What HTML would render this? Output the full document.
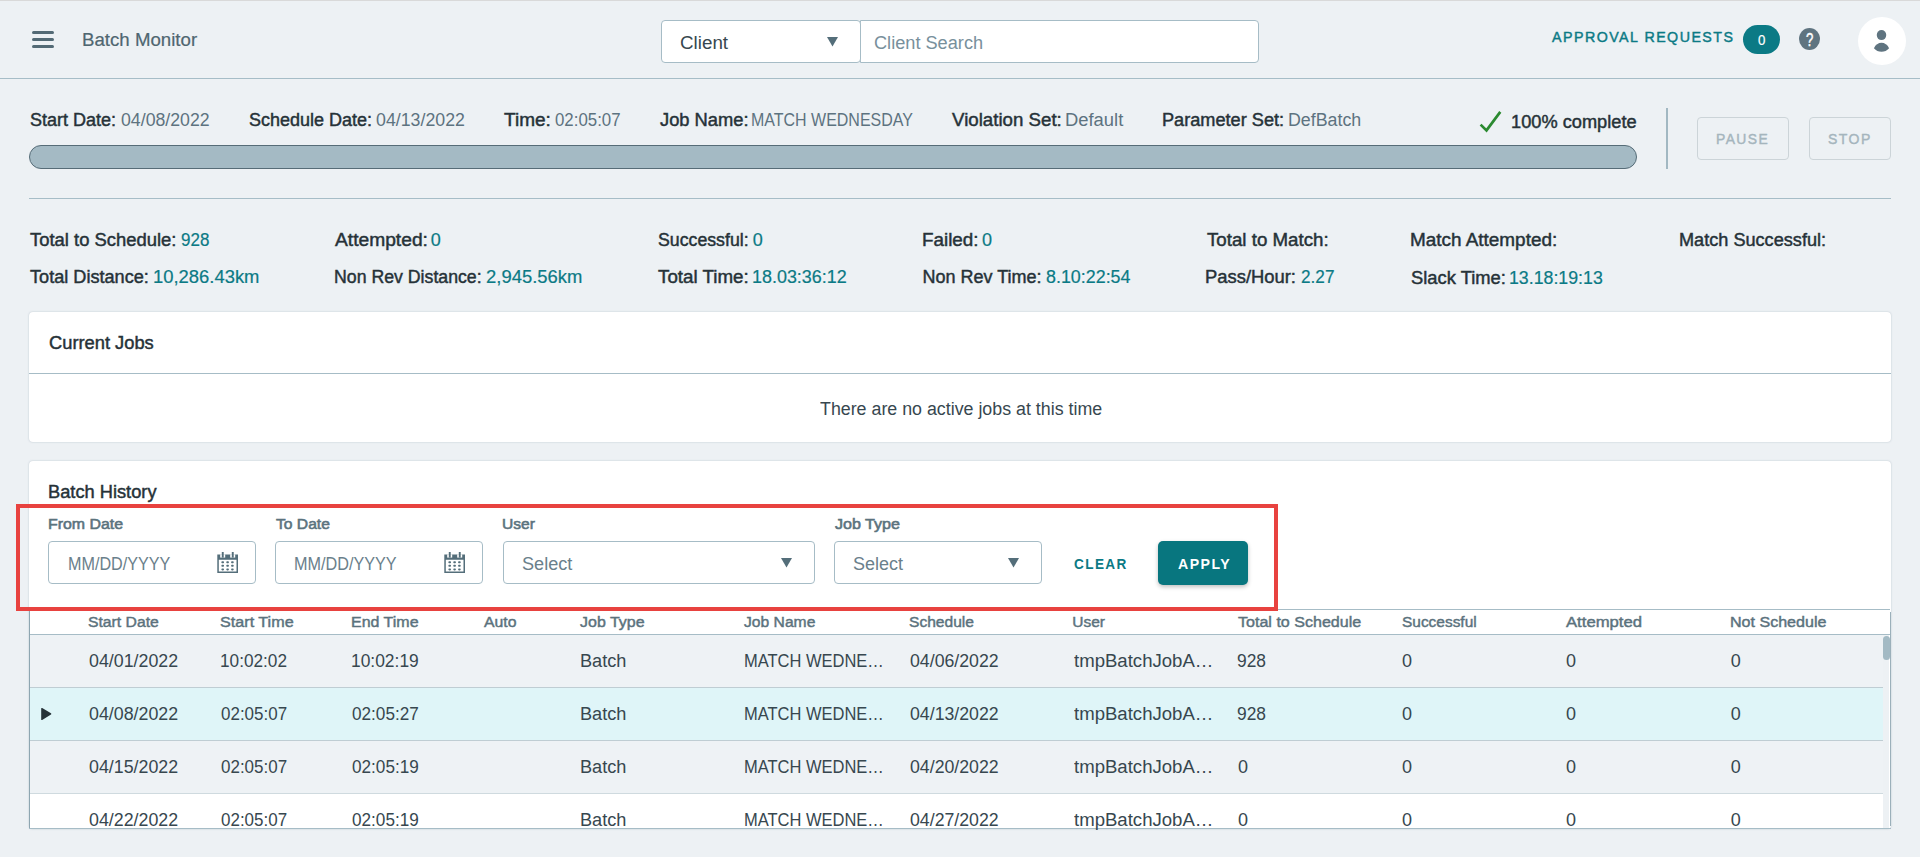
<!DOCTYPE html>
<html><head><meta charset="utf-8"><title>Batch Monitor</title>
<style>
html,body{margin:0;padding:0;}
body{width:1920px;height:857px;overflow:hidden;position:relative;background:#edf1f4;font-family:"Liberation Sans",sans-serif;}
.a{position:absolute;box-sizing:border-box;}
.t{position:absolute;line-height:0;white-space:nowrap;transform-origin:0 0;font-family:"Liberation Sans",sans-serif;}
.bar{position:absolute;left:32px;width:22px;height:3px;border-radius:1.5px;background:#536a75;}
</style></head><body>
<div class="a" style="left:0;top:0;width:1920px;height:1px;background:#d9d9d9"></div>
<!-- header -->
<div class="a" style="left:0;top:78px;width:1920px;height:1px;background:#a6bdc7"></div>
<div class="bar" style="top:31px"></div>
<div class="bar" style="top:38px"></div>
<div class="bar" style="top:45px"></div>
<div class="a" style="left:860px;top:20px;width:399px;height:43px;background:#fff;border:1px solid #a6bcc6;border-radius:0 4px 4px 0"></div>
<div class="a" style="left:661px;top:20px;width:200px;height:43px;background:#fff;border:1px solid #a6bcc6;border-radius:4px"></div>
<svg class="a" style="left:826px;top:36px" width="13" height="11" viewBox="0 0 13 11"><path d="M1 1 L12 1 L6.5 10.5 Z" fill="#546e7a"/></svg>
<div class="a" style="left:1743px;top:25px;width:37px;height:29px;border-radius:14.5px;background:#0b7a85"></div>
<div class="a" style="left:1799px;top:28px;width:21px;height:22px;border-radius:50%;background:#5f7480"></div>
<div class="a" style="left:1858px;top:17px;width:48px;height:48px;border-radius:50%;background:#fff"></div>
<svg class="a" style="left:1872px;top:29px" width="20" height="24" viewBox="0 0 20 24">
 <ellipse cx="9.5" cy="6.1" rx="4.75" ry="5" fill="#5f7480"/>
 <path d="M1.9 19.3 C3.5 15.5 6.5 13.7 9.5 13.7 C12.5 13.7 15.5 15.5 17.1 19.3 C15 21.8 12.5 22.8 9.5 22.8 C6.5 22.8 4 21.8 1.9 19.3 Z" fill="#5f7480"/>
</svg>
<!-- info bar -->
<div class="a" style="left:29px;top:145px;width:1608px;height:24px;border-radius:12px;background:#a4bac4;border:1px solid #566c77"></div>
<svg class="a" style="left:1476px;top:108px" width="30" height="28" viewBox="0 0 30 28"><path d="M4.6 16.6 L10.5 22.4 L24.3 3.9" fill="none" stroke="#2b8a30" stroke-width="2.7"/></svg>
<div class="a" style="left:1666px;top:108px;width:2px;height:61px;background:#a2b8c2"></div>
<div class="a" style="left:1697px;top:117px;width:92px;height:43px;border:1px solid #ccd4d8;border-radius:4px"></div>
<div class="a" style="left:1809px;top:117px;width:82px;height:43px;border:1px solid #ccd4d8;border-radius:4px"></div>
<div class="a" style="left:29px;top:198px;width:1862px;height:1px;background:#a6bdc7"></div>
<!-- current jobs card -->
<div class="a" style="left:29px;top:312px;width:1862px;height:130px;background:#fff;border-radius:4px;box-shadow:0 0 2px rgba(80,110,125,.35)"></div>
<div class="a" style="left:29px;top:373px;width:1862px;height:1px;background:#a6bcc6"></div>
<!-- batch history card -->
<div class="a" style="left:29px;top:461px;width:1862px;height:368px;background:#fff;border-radius:4px;box-shadow:0 0 2px rgba(80,110,125,.35)"></div>
<!-- filters -->
<div class="a" style="left:48px;top:541px;width:208px;height:43px;border:1px solid #a6bcc6;border-radius:4px;background:#fff"></div>
<div class="a" style="left:275px;top:541px;width:208px;height:43px;border:1px solid #a6bcc6;border-radius:4px;background:#fff"></div>
<div class="a" style="left:503px;top:541px;width:312px;height:43px;border:1px solid #a6bcc6;border-radius:4px;background:#fff"></div>
<div class="a" style="left:834px;top:541px;width:208px;height:43px;border:1px solid #a6bcc6;border-radius:4px;background:#fff"></div>
<svg class="a" style="left:780px;top:557px" width="13" height="11" viewBox="0 0 13 11"><path d="M1 1 L12 1 L6.5 10.5 Z" fill="#546e7a"/></svg>
<svg class="a" style="left:1007px;top:557px" width="13" height="11" viewBox="0 0 13 11"><path d="M1 1 L12 1 L6.5 10.5 Z" fill="#546e7a"/></svg>
<div class="a" style="left:1158px;top:541px;width:90px;height:44px;border-radius:5px;background:#08767f;box-shadow:0 2px 4px rgba(0,0,0,.25)"></div>
<svg class="a" style="left:217px;top:552px" width="22" height="22" viewBox="0 0 22 22">
<path fill="#546e7a" fill-rule="evenodd" d="M0.3 2.4 H21 V21 H0.3 Z M1.8 7.8 V19.6 H19.5 V7.8 Z"/>
<rect x="3.2" y="2.3" width="5" height="3.3" fill="#fff"/><rect x="13.2" y="2.3" width="5" height="3.3" fill="#fff"/>
<rect x="4.8" y="0" width="1.9" height="5.6" fill="#546e7a"/><rect x="14.8" y="0" width="1.9" height="5.6" fill="#546e7a"/>
<g fill="#546e7a"><rect x="4.4" y="9.2" width="2.6" height="2" rx=".8"/><rect x="9.3" y="9.2" width="2.6" height="2" rx=".8"/><rect x="14.1" y="9.2" width="2.6" height="2" rx=".8"/>
<rect x="4.4" y="12.8" width="2.6" height="2" rx=".8"/><rect x="9.3" y="12.8" width="2.6" height="2" rx=".8"/><rect x="14.1" y="12.8" width="2.6" height="2" rx=".8"/>
<rect x="4.4" y="16.4" width="2.6" height="2" rx=".8"/><rect x="9.3" y="16.4" width="2.6" height="2" rx=".8"/><rect x="14.1" y="16.4" width="2.6" height="2" rx=".8"/></g>
</svg>
<svg class="a" style="left:444px;top:552px" width="22" height="22" viewBox="0 0 22 22">
<path fill="#546e7a" fill-rule="evenodd" d="M0.3 2.4 H21 V21 H0.3 Z M1.8 7.8 V19.6 H19.5 V7.8 Z"/>
<rect x="3.2" y="2.3" width="5" height="3.3" fill="#fff"/><rect x="13.2" y="2.3" width="5" height="3.3" fill="#fff"/>
<rect x="4.8" y="0" width="1.9" height="5.6" fill="#546e7a"/><rect x="14.8" y="0" width="1.9" height="5.6" fill="#546e7a"/>
<g fill="#546e7a"><rect x="4.4" y="9.2" width="2.6" height="2" rx=".8"/><rect x="9.3" y="9.2" width="2.6" height="2" rx=".8"/><rect x="14.1" y="9.2" width="2.6" height="2" rx=".8"/>
<rect x="4.4" y="12.8" width="2.6" height="2" rx=".8"/><rect x="9.3" y="12.8" width="2.6" height="2" rx=".8"/><rect x="14.1" y="12.8" width="2.6" height="2" rx=".8"/>
<rect x="4.4" y="16.4" width="2.6" height="2" rx=".8"/><rect x="9.3" y="16.4" width="2.6" height="2" rx=".8"/><rect x="14.1" y="16.4" width="2.6" height="2" rx=".8"/></g>
</svg>
<!-- table -->
<div class="a" style="left:29px;top:609px;width:1861px;height:1px;background:#a6bcc6"></div>
<div class="a" style="left:29px;top:610px;width:1px;height:218px;background:#8ea6b1"></div>
<div class="a" style="left:1890px;top:612px;width:1px;height:214px;background:#9bb0ba"></div>
<div class="a" style="left:30px;top:634px;width:1860px;height:1px;background:#a6bcc6"></div>
<div class="a" style="left:30px;top:635px;width:1853px;height:52px;background:#eef2f5"></div>
<div class="a" style="left:30px;top:687px;width:1853px;height:1px;background:#bfcdd3"></div>
<div class="a" style="left:30px;top:688px;width:1853px;height:52px;background:#dff5f8"></div>
<div class="a" style="left:30px;top:740px;width:1853px;height:1px;background:#bfcdd3"></div>
<div class="a" style="left:30px;top:741px;width:1853px;height:52px;background:#eef2f5"></div>
<div class="a" style="left:30px;top:793px;width:1853px;height:1px;background:#cfdadf"></div>
<div class="a" style="left:1883px;top:635px;width:6px;height:193px;background:#edf1f4"></div>
<div class="a" style="left:1883px;top:636px;width:7px;height:24px;border-radius:3.5px;background:#a3bac4"></div>
<div class="a" style="left:29px;top:828px;width:1862px;height:1px;background:#a6bcc6"></div>
<svg class="a" style="left:40px;top:707px" width="12" height="14" viewBox="0 0 12 14"><path d="M1.2 1.5 Q1.2 0.5 2.2 1.1 L11 6.3 Q11.8 7 11 7.6 L2.2 12.9 Q1.2 13.5 1.2 12.4 Z" fill="#263238"/></svg>
<!-- red rect -->
<div class="a" style="left:16px;top:504px;width:1262px;height:107px;border:4px solid #e8423f"></div>
<div class="t" style="left:81.96px;top:40.00px;font-size:18px;font-weight:400;color:#4f6670;letter-spacing:0.000px;transform:scaleX(1.0364);-webkit-text-stroke-width:.2px;">Batch Monitor</div>
<div class="t" style="left:679.96px;top:43.00px;font-size:18px;font-weight:400;color:#37474f;letter-spacing:0.000px;transform:scaleX(1.0444);">Client</div>
<div class="t" style="left:873.99px;top:43.00px;font-size:18px;font-weight:400;color:#78909c;letter-spacing:0.000px;transform:scaleX(1.0094);">Client Search</div>
<div class="t" style="left:1552.00px;top:37.00px;font-size:15.5px;font-weight:400;color:#0b7a85;letter-spacing:1.600px;transform:scaleX(0.9188);-webkit-text-stroke-width:.45px;">APPROVAL REQUESTS</div>
<div class="t" style="left:30.00px;top:120.00px;font-size:18px;font-weight:400;color:#263238;letter-spacing:0.000px;-webkit-text-stroke-width:.45px;">Start Date:</div>
<div class="t" style="left:121.00px;top:120.00px;font-size:18px;font-weight:400;color:#5d7380;letter-spacing:0.000px;transform:scaleX(0.9844);">04/08/2022</div>
<div class="t" style="left:249.00px;top:120.00px;font-size:18px;font-weight:400;color:#263238;letter-spacing:0.000px;-webkit-text-stroke-width:.45px;">Schedule Date:</div>
<div class="t" style="left:376.00px;top:120.00px;font-size:18px;font-weight:400;color:#5d7380;letter-spacing:0.000px;transform:scaleX(0.9867);">04/13/2022</div>
<div class="t" style="left:504.00px;top:120.00px;font-size:18px;font-weight:400;color:#263238;letter-spacing:0.000px;transform:scaleX(1.0558);-webkit-text-stroke-width:.45px;">Time:</div>
<div class="t" style="left:555.00px;top:120.00px;font-size:18px;font-weight:400;color:#5d7380;letter-spacing:0.000px;transform:scaleX(0.9357);">02:05:07</div>
<div class="t" style="left:660.00px;top:120.00px;font-size:18px;font-weight:400;color:#263238;letter-spacing:0.000px;transform:scaleX(1.0174);-webkit-text-stroke-width:.45px;">Job Name:</div>
<div class="t" style="left:751.11px;top:120.00px;font-size:18px;font-weight:400;color:#5d7380;letter-spacing:0.000px;transform:scaleX(0.8878);">MATCH WEDNESDAY</div>
<div class="t" style="left:952.00px;top:120.00px;font-size:18px;font-weight:400;color:#263238;letter-spacing:0.000px;transform:scaleX(1.0381);-webkit-text-stroke-width:.45px;">Violation Set:</div>
<div class="t" style="left:1064.78px;top:120.00px;font-size:18px;font-weight:400;color:#5d7380;letter-spacing:0.000px;transform:scaleX(1.0214);">Default</div>
<div class="t" style="left:1162.19px;top:120.00px;font-size:18px;font-weight:400;color:#263238;letter-spacing:0.000px;transform:scaleX(1.0084);-webkit-text-stroke-width:.45px;">Parameter Set:</div>
<div class="t" style="left:1288.01px;top:120.00px;font-size:18px;font-weight:400;color:#5d7380;letter-spacing:0.000px;transform:scaleX(0.9889);">DefBatch</div>
<div class="t" style="left:1510.99px;top:122.00px;font-size:18px;font-weight:400;color:#263238;letter-spacing:0.000px;transform:scaleX(1.0122);-webkit-text-stroke-width:.45px;">100% complete</div>
<div class="t" style="left:1716.11px;top:139.00px;font-size:15.5px;font-weight:400;color:#a5b5bd;letter-spacing:1.600px;transform:scaleX(0.8947);-webkit-text-stroke-width:.45px;">PAUSE</div>
<div class="t" style="left:1828.00px;top:139.00px;font-size:15.5px;font-weight:400;color:#a5b5bd;letter-spacing:1.600px;transform:scaleX(0.9043);-webkit-text-stroke-width:.45px;">STOP</div>
<div class="t" style="left:30.00px;top:240.00px;font-size:18px;font-weight:400;color:#263238;letter-spacing:0.000px;transform:scaleX(1.0232);-webkit-text-stroke-width:.45px;">Total to Schedule:</div>
<div class="t" style="left:180.70px;top:240.00px;font-size:18px;font-weight:400;color:#0b7a85;letter-spacing:0.000px;transform:scaleX(0.9433);-webkit-text-stroke-width:.2px;">928</div>
<div class="t" style="left:334.50px;top:240.00px;font-size:18px;font-weight:400;color:#263238;letter-spacing:0.000px;transform:scaleX(1.0674);-webkit-text-stroke-width:.45px;">Attempted:</div>
<div class="t" style="left:430.70px;top:240.00px;font-size:18px;font-weight:400;color:#0b7a85;letter-spacing:0.000px;-webkit-text-stroke-width:.2px;">0</div>
<div class="t" style="left:658.00px;top:240.00px;font-size:18px;font-weight:400;color:#263238;letter-spacing:0.000px;transform:scaleX(0.9846);-webkit-text-stroke-width:.45px;">Successful:</div>
<div class="t" style="left:752.80px;top:240.00px;font-size:18px;font-weight:400;color:#0b7a85;letter-spacing:0.000px;-webkit-text-stroke-width:.2px;">0</div>
<div class="t" style="left:922.45px;top:240.00px;font-size:18px;font-weight:400;color:#263238;letter-spacing:0.000px;transform:scaleX(1.0462);-webkit-text-stroke-width:.45px;">Failed:</div>
<div class="t" style="left:982.00px;top:240.00px;font-size:18px;font-weight:400;color:#0b7a85;letter-spacing:0.000px;-webkit-text-stroke-width:.2px;">0</div>
<div class="t" style="left:1206.50px;top:240.00px;font-size:18px;font-weight:400;color:#263238;letter-spacing:0.000px;transform:scaleX(1.0388);-webkit-text-stroke-width:.45px;">Total to Match:</div>
<div class="t" style="left:1409.95px;top:240.00px;font-size:18px;font-weight:400;color:#263238;letter-spacing:0.000px;transform:scaleX(1.0507);-webkit-text-stroke-width:.45px;">Match Attempted:</div>
<div class="t" style="left:1678.99px;top:240.00px;font-size:18px;font-weight:400;color:#263238;letter-spacing:0.000px;transform:scaleX(1.0069);-webkit-text-stroke-width:.45px;">Match Successful:</div>
<div class="t" style="left:30.00px;top:277.00px;font-size:18px;font-weight:400;color:#263238;letter-spacing:0.000px;transform:scaleX(1.0068);-webkit-text-stroke-width:.45px;">Total Distance:</div>
<div class="t" style="left:152.68px;top:277.00px;font-size:18px;font-weight:400;color:#0b7a85;letter-spacing:0.000px;transform:scaleX(1.0225);-webkit-text-stroke-width:.2px;">10,286.43km</div>
<div class="t" style="left:334.02px;top:277.00px;font-size:18px;font-weight:400;color:#263238;letter-spacing:0.000px;transform:scaleX(0.9838);-webkit-text-stroke-width:.45px;">Non Rev Distance:</div>
<div class="t" style="left:485.70px;top:277.00px;font-size:18px;font-weight:400;color:#0b7a85;letter-spacing:0.000px;transform:scaleX(1.0247);-webkit-text-stroke-width:.2px;">2,945.56km</div>
<div class="t" style="left:658.00px;top:277.00px;font-size:18px;font-weight:400;color:#263238;letter-spacing:0.000px;transform:scaleX(1.0419);-webkit-text-stroke-width:.45px;">Total Time:</div>
<div class="t" style="left:752.40px;top:277.00px;font-size:18px;font-weight:400;color:#0b7a85;letter-spacing:0.000px;transform:scaleX(0.9957);-webkit-text-stroke-width:.2px;">18.03:36:12</div>
<div class="t" style="left:922.50px;top:277.00px;font-size:18px;font-weight:400;color:#263238;letter-spacing:0.000px;-webkit-text-stroke-width:.45px;">Non Rev Time:</div>
<div class="t" style="left:1045.60px;top:277.00px;font-size:18px;font-weight:400;color:#0b7a85;letter-spacing:0.000px;transform:scaleX(0.9929);-webkit-text-stroke-width:.2px;">8.10:22:54</div>
<div class="t" style="left:1205.48px;top:277.00px;font-size:18px;font-weight:400;color:#263238;letter-spacing:0.000px;transform:scaleX(1.0218);-webkit-text-stroke-width:.45px;">Pass/Hour:</div>
<div class="t" style="left:1300.60px;top:277.00px;font-size:18px;font-weight:400;color:#0b7a85;letter-spacing:0.000px;transform:scaleX(0.9543);-webkit-text-stroke-width:.2px;">2.27</div>
<div class="t" style="left:1411.00px;top:278.00px;font-size:18px;font-weight:400;color:#263238;letter-spacing:0.000px;transform:scaleX(1.0196);-webkit-text-stroke-width:.45px;">Slack Time:</div>
<div class="t" style="left:1509.31px;top:278.00px;font-size:18px;font-weight:400;color:#0b7a85;letter-spacing:0.000px;transform:scaleX(0.9862);-webkit-text-stroke-width:.2px;">13.18:19:13</div>
<div class="t" style="left:49.00px;top:343.00px;font-size:18px;font-weight:400;color:#263238;letter-spacing:0.000px;transform:scaleX(1.0165);-webkit-text-stroke-width:.45px;">Current Jobs</div>
<div class="t" style="left:819.50px;top:409.00px;font-size:18px;font-weight:400;color:#37474f;letter-spacing:0.000px;transform:scaleX(0.9895);">There are no active jobs at this time</div>
<div class="t" style="left:48.49px;top:492.00px;font-size:18px;font-weight:400;color:#263238;letter-spacing:0.000px;transform:scaleX(1.0140);-webkit-text-stroke-width:.45px;">Batch History</div>
<div class="t" style="left:47.77px;top:524.00px;font-size:15.5px;font-weight:400;color:#5b737e;letter-spacing:0.000px;transform:scaleX(1.0264);-webkit-text-stroke-width:.6px;">From Date</div>
<div class="t" style="left:275.50px;top:524.00px;font-size:15.5px;font-weight:400;color:#5b737e;letter-spacing:0.000px;transform:scaleX(1.0094);-webkit-text-stroke-width:.6px;">To Date</div>
<div class="t" style="left:502.49px;top:524.00px;font-size:15.5px;font-weight:400;color:#5b737e;letter-spacing:0.000px;transform:scaleX(1.0063);-webkit-text-stroke-width:.6px;">User</div>
<div class="t" style="left:834.60px;top:524.00px;font-size:15.5px;font-weight:400;color:#5b737e;letter-spacing:0.000px;transform:scaleX(1.0381);-webkit-text-stroke-width:.6px;">Job Type</div>
<div class="t" style="left:67.60px;top:564.00px;font-size:18px;font-weight:400;color:#6a808b;letter-spacing:0.000px;transform:scaleX(0.8982);">MM/DD/YYYY</div>
<div class="t" style="left:294.10px;top:564.00px;font-size:18px;font-weight:400;color:#6a808b;letter-spacing:0.000px;transform:scaleX(0.9000);">MM/DD/YYYY</div>
<div class="t" style="left:521.69px;top:564.00px;font-size:18px;font-weight:400;color:#6a808b;letter-spacing:0.000px;transform:scaleX(1.0061);">Select</div>
<div class="t" style="left:853.00px;top:564.00px;font-size:18px;font-weight:400;color:#6a808b;letter-spacing:0.000px;">Select</div>
<div class="t" style="left:1074.00px;top:564.00px;font-size:15.5px;font-weight:700;color:#0b7a85;letter-spacing:1.600px;transform:scaleX(0.8763);">CLEAR</div>
<div class="t" style="left:1177.50px;top:564.00px;font-size:15.5px;font-weight:700;color:#ffffff;letter-spacing:1.600px;transform:scaleX(0.9107);">APPLY</div>
<div class="t" style="left:88.00px;top:622.00px;font-size:15.5px;font-weight:400;color:#5b727d;letter-spacing:0.000px;transform:scaleX(1.0143);-webkit-text-stroke-width:.45px;">Start Date</div>
<div class="t" style="left:220.00px;top:622.00px;font-size:15.5px;font-weight:400;color:#5b727d;letter-spacing:0.000px;transform:scaleX(1.0423);-webkit-text-stroke-width:.45px;">Start Time</div>
<div class="t" style="left:351.27px;top:622.00px;font-size:15.5px;font-weight:400;color:#5b727d;letter-spacing:0.000px;transform:scaleX(1.0312);-webkit-text-stroke-width:.45px;">End Time</div>
<div class="t" style="left:483.70px;top:622.00px;font-size:15.5px;font-weight:400;color:#5b727d;letter-spacing:0.000px;transform:scaleX(1.0187);-webkit-text-stroke-width:.45px;">Auto</div>
<div class="t" style="left:580.00px;top:622.00px;font-size:15.5px;font-weight:400;color:#5b727d;letter-spacing:0.000px;transform:scaleX(1.0317);-webkit-text-stroke-width:.45px;">Job Type</div>
<div class="t" style="left:744.30px;top:622.00px;font-size:15.5px;font-weight:400;color:#5b727d;letter-spacing:0.000px;transform:scaleX(1.0099);-webkit-text-stroke-width:.45px;">Job Name</div>
<div class="t" style="left:909.00px;top:622.00px;font-size:15.5px;font-weight:400;color:#5b727d;letter-spacing:0.000px;transform:scaleX(1.0046);-webkit-text-stroke-width:.45px;">Schedule</div>
<div class="t" style="left:1072.30px;top:622.00px;font-size:15.5px;font-weight:400;color:#5b727d;letter-spacing:0.000px;-webkit-text-stroke-width:.45px;">User</div>
<div class="t" style="left:1237.70px;top:622.00px;font-size:15.5px;font-weight:400;color:#5b727d;letter-spacing:0.000px;transform:scaleX(1.0361);-webkit-text-stroke-width:.45px;">Total to Schedule</div>
<div class="t" style="left:1402.00px;top:622.00px;font-size:15.5px;font-weight:400;color:#5b727d;letter-spacing:0.000px;transform:scaleX(0.9960);-webkit-text-stroke-width:.45px;">Successful</div>
<div class="t" style="left:1566.00px;top:622.00px;font-size:15.5px;font-weight:400;color:#5b727d;letter-spacing:0.000px;transform:scaleX(1.0757);-webkit-text-stroke-width:.45px;">Attempted</div>
<div class="t" style="left:1729.66px;top:622.00px;font-size:15.5px;font-weight:400;color:#5b727d;letter-spacing:0.000px;transform:scaleX(1.0359);-webkit-text-stroke-width:.45px;">Not Schedule</div>
<div class="t" style="left:88.70px;top:661.00px;font-size:18px;font-weight:400;color:#37474f;letter-spacing:0.000px;transform:scaleX(0.9889);">04/01/2022</div>
<div class="t" style="left:219.74px;top:661.00px;font-size:18px;font-weight:400;color:#37474f;letter-spacing:0.000px;transform:scaleX(0.9565);">10:02:02</div>
<div class="t" style="left:351.33px;top:661.00px;font-size:18px;font-weight:400;color:#37474f;letter-spacing:0.000px;transform:scaleX(0.9667);">10:02:19</div>
<div class="t" style="left:580.29px;top:661.00px;font-size:18px;font-weight:400;color:#37474f;letter-spacing:0.000px;transform:scaleX(1.0091);">Batch</div>
<div class="t" style="left:744.38px;top:661.00px;font-size:18px;font-weight:400;color:#37474f;letter-spacing:0.000px;transform:scaleX(0.9160);">MATCH WEDNE…</div>
<div class="t" style="left:909.70px;top:661.00px;font-size:18px;font-weight:400;color:#37474f;letter-spacing:0.000px;transform:scaleX(0.9844);">04/06/2022</div>
<div class="t" style="left:1074.00px;top:661.00px;font-size:18px;font-weight:400;color:#37474f;letter-spacing:0.000px;transform:scaleX(1.0323);">tmpBatchJobA…</div>
<div class="t" style="left:1237.03px;top:661.00px;font-size:18px;font-weight:400;color:#37474f;letter-spacing:0.000px;transform:scaleX(0.9655);">928</div>
<div class="t" style="left:1402.00px;top:661.00px;font-size:18px;font-weight:400;color:#37474f;letter-spacing:0.000px;">0</div>
<div class="t" style="left:1566.00px;top:661.00px;font-size:18px;font-weight:400;color:#37474f;letter-spacing:0.000px;">0</div>
<div class="t" style="left:1730.70px;top:661.00px;font-size:18px;font-weight:400;color:#37474f;letter-spacing:0.000px;">0</div>
<div class="t" style="left:88.70px;top:714.00px;font-size:18px;font-weight:400;color:#37474f;letter-spacing:0.000px;transform:scaleX(0.9889);">04/08/2022</div>
<div class="t" style="left:220.70px;top:714.00px;font-size:18px;font-weight:400;color:#37474f;letter-spacing:0.000px;transform:scaleX(0.9429);">02:05:07</div>
<div class="t" style="left:352.30px;top:714.00px;font-size:18px;font-weight:400;color:#37474f;letter-spacing:0.000px;transform:scaleX(0.9529);">02:05:27</div>
<div class="t" style="left:580.29px;top:714.00px;font-size:18px;font-weight:400;color:#37474f;letter-spacing:0.000px;transform:scaleX(1.0091);">Batch</div>
<div class="t" style="left:744.38px;top:714.00px;font-size:18px;font-weight:400;color:#37474f;letter-spacing:0.000px;transform:scaleX(0.9160);">MATCH WEDNE…</div>
<div class="t" style="left:909.70px;top:714.00px;font-size:18px;font-weight:400;color:#37474f;letter-spacing:0.000px;transform:scaleX(0.9844);">04/13/2022</div>
<div class="t" style="left:1074.00px;top:714.00px;font-size:18px;font-weight:400;color:#37474f;letter-spacing:0.000px;transform:scaleX(1.0323);">tmpBatchJobA…</div>
<div class="t" style="left:1237.03px;top:714.00px;font-size:18px;font-weight:400;color:#37474f;letter-spacing:0.000px;transform:scaleX(0.9655);">928</div>
<div class="t" style="left:1402.00px;top:714.00px;font-size:18px;font-weight:400;color:#37474f;letter-spacing:0.000px;">0</div>
<div class="t" style="left:1566.00px;top:714.00px;font-size:18px;font-weight:400;color:#37474f;letter-spacing:0.000px;">0</div>
<div class="t" style="left:1730.70px;top:714.00px;font-size:18px;font-weight:400;color:#37474f;letter-spacing:0.000px;">0</div>
<div class="t" style="left:88.70px;top:767.00px;font-size:18px;font-weight:400;color:#37474f;letter-spacing:0.000px;transform:scaleX(0.9889);">04/15/2022</div>
<div class="t" style="left:220.70px;top:767.00px;font-size:18px;font-weight:400;color:#37474f;letter-spacing:0.000px;transform:scaleX(0.9429);">02:05:07</div>
<div class="t" style="left:352.30px;top:767.00px;font-size:18px;font-weight:400;color:#37474f;letter-spacing:0.000px;transform:scaleX(0.9529);">02:05:19</div>
<div class="t" style="left:580.29px;top:767.00px;font-size:18px;font-weight:400;color:#37474f;letter-spacing:0.000px;transform:scaleX(1.0091);">Batch</div>
<div class="t" style="left:744.38px;top:767.00px;font-size:18px;font-weight:400;color:#37474f;letter-spacing:0.000px;transform:scaleX(0.9160);">MATCH WEDNE…</div>
<div class="t" style="left:909.70px;top:767.00px;font-size:18px;font-weight:400;color:#37474f;letter-spacing:0.000px;transform:scaleX(0.9844);">04/20/2022</div>
<div class="t" style="left:1074.00px;top:767.00px;font-size:18px;font-weight:400;color:#37474f;letter-spacing:0.000px;transform:scaleX(1.0323);">tmpBatchJobA…</div>
<div class="t" style="left:1238.00px;top:767.00px;font-size:18px;font-weight:400;color:#37474f;letter-spacing:0.000px;">0</div>
<div class="t" style="left:1402.00px;top:767.00px;font-size:18px;font-weight:400;color:#37474f;letter-spacing:0.000px;">0</div>
<div class="t" style="left:1566.00px;top:767.00px;font-size:18px;font-weight:400;color:#37474f;letter-spacing:0.000px;">0</div>
<div class="t" style="left:1730.70px;top:767.00px;font-size:18px;font-weight:400;color:#37474f;letter-spacing:0.000px;">0</div>
<div class="t" style="left:88.70px;top:820.00px;font-size:18px;font-weight:400;color:#37474f;letter-spacing:0.000px;transform:scaleX(0.9889);">04/22/2022</div>
<div class="t" style="left:220.70px;top:820.00px;font-size:18px;font-weight:400;color:#37474f;letter-spacing:0.000px;transform:scaleX(0.9429);">02:05:07</div>
<div class="t" style="left:352.30px;top:820.00px;font-size:18px;font-weight:400;color:#37474f;letter-spacing:0.000px;transform:scaleX(0.9529);">02:05:19</div>
<div class="t" style="left:580.29px;top:820.00px;font-size:18px;font-weight:400;color:#37474f;letter-spacing:0.000px;transform:scaleX(1.0091);">Batch</div>
<div class="t" style="left:744.38px;top:820.00px;font-size:18px;font-weight:400;color:#37474f;letter-spacing:0.000px;transform:scaleX(0.9160);">MATCH WEDNE…</div>
<div class="t" style="left:909.70px;top:820.00px;font-size:18px;font-weight:400;color:#37474f;letter-spacing:0.000px;transform:scaleX(0.9844);">04/27/2022</div>
<div class="t" style="left:1074.00px;top:820.00px;font-size:18px;font-weight:400;color:#37474f;letter-spacing:0.000px;transform:scaleX(1.0323);">tmpBatchJobA…</div>
<div class="t" style="left:1238.00px;top:820.00px;font-size:18px;font-weight:400;color:#37474f;letter-spacing:0.000px;">0</div>
<div class="t" style="left:1402.00px;top:820.00px;font-size:18px;font-weight:400;color:#37474f;letter-spacing:0.000px;">0</div>
<div class="t" style="left:1566.00px;top:820.00px;font-size:18px;font-weight:400;color:#37474f;letter-spacing:0.000px;">0</div>
<div class="t" style="left:1730.70px;top:820.00px;font-size:18px;font-weight:400;color:#37474f;letter-spacing:0.000px;">0</div>
<div class="t" style="left:1758.00px;top:40.00px;font-size:15.5px;font-weight:400;color:#ffffff;letter-spacing:0.000px;transform:scaleX(0.8556);-webkit-text-stroke-width:.2px;">0</div>
<div class="t" style="left:1806.00px;top:40.00px;font-size:18px;font-weight:400;color:#ffffff;letter-spacing:0.000px;transform:scaleX(0.7300);-webkit-text-stroke-width:.45px;">?</div>
</body></html>
